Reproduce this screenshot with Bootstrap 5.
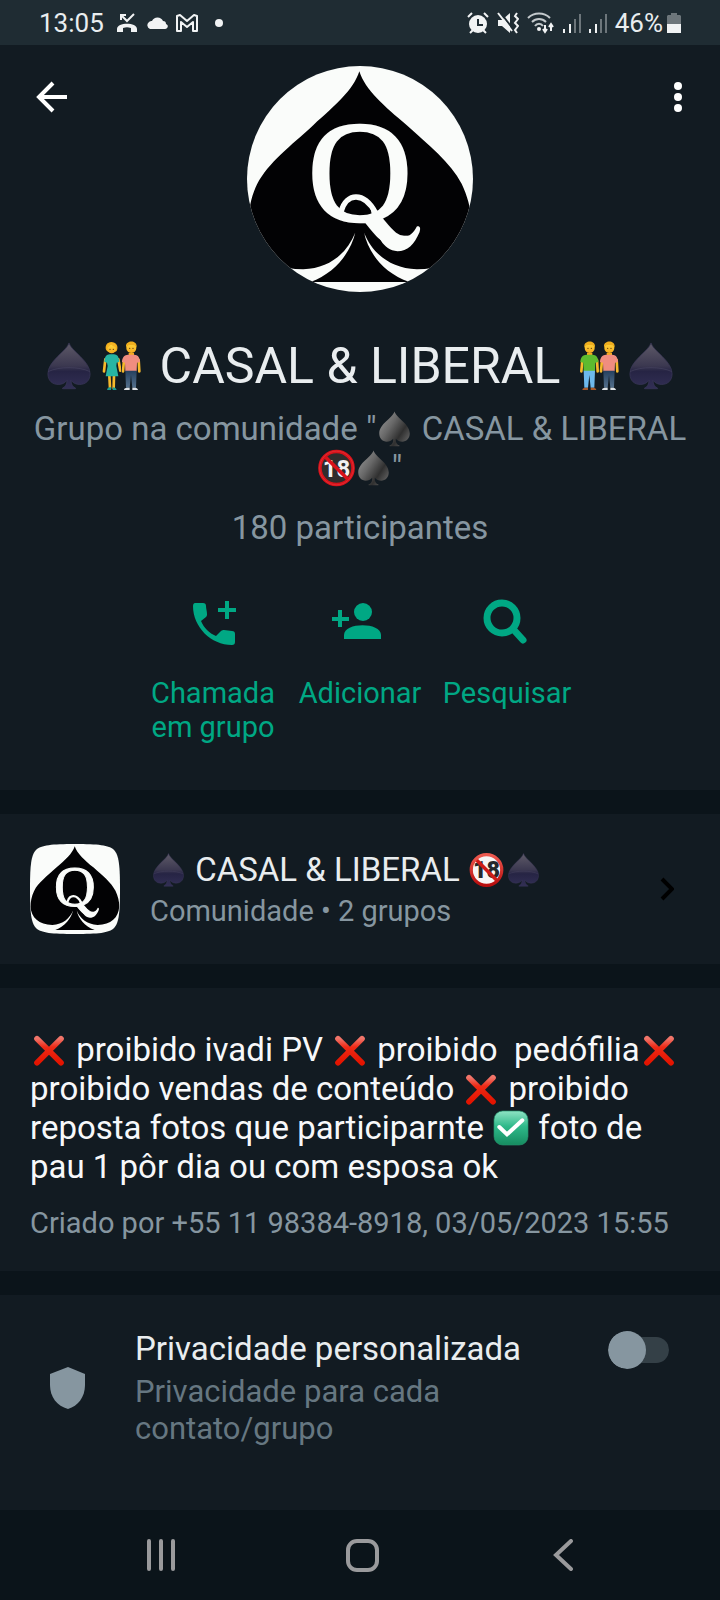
<!DOCTYPE html>
<html lang="pt-BR">
<head>
<meta charset="utf-8">
<meta name="viewport" content="width=device-width, initial-scale=1">
<title>Dados do grupo</title>
<link href="https://cdn.jsdelivr.net/npm/bootstrap@5.3.0/dist/css/bootstrap.min.css" rel="stylesheet">
<style>
  :root { --bar: #1f2c33; --panel: #121b22; --base: #0b141a; --ink: #e9edef; --muted: #8696a0; --dim: #667781; --green: #00a884; }
  body { background: var(--base); color: var(--ink); font-family: Roboto, "Liberation Sans", sans-serif; font-size: 33px; line-height: 39px; }
  svg { display: block; flex: none; }
  button.plain { background: none; border: 0; padding: 0; color: inherit; }
  .panel { background: var(--panel); }
  .statusbar { background: var(--bar); height: 45px; padding: 0 39px; font-size: 26px; line-height: 30px; }
  .status-left { gap: 8px; }
  .status-right { gap: 8px; }
  .top-grid { display: grid; grid-template-columns: 1fr auto 1fr; padding: 21px 22px 0; }
  .btn-back { width: 60px; height: 62px; }
  .btn-more { width: 40px; height: 62px; }
  .top-panel { padding-bottom: 46px; }
  .group-name { font-size: 50px; line-height: 58px; font-weight: 400; margin: 45px 0 0; }
  .group-of { color: var(--muted); margin: 14px 30px 0; }
  .group-count { color: var(--muted); margin: 21px 30px 0; }
  .actions { margin-top: 49px; }
  .action { width: 147px; font-size: 29px; line-height: 34px; }
  button.action { color: var(--green); }
  .action span { margin-top: 24px; }
  .em { display: inline-block; width: 37px; height: 38px; vertical-align: -8px; }
  .group-name .em { width: 52px; height: 52px; vertical-align: -9px; }
  .gap-24 { margin-top: 24px; }
  .community { padding: 30px; gap: 30px; color: var(--ink); }
  .sub { color: var(--muted); font-size: 29px; line-height: 34px; }
  .community .sub { margin-top: 5px; }
  .about { padding: 42px 30px 31px; }
  .about p { margin: 0; color: #f7f8fa; white-space: pre-wrap; }
  .about .em { width: 38px; }
  .about .sub { color: var(--muted); margin-top: 20px; }
  .privacy { padding: 34px 51px 63px 50px; }
  .privacy label { margin-left: 50px; }
  .privacy .hint { color: var(--dim); font-size: 31px; line-height: 37px; margin-top: 5px; }
  .form-check-input.toggle { width: 61px; height: 38px; margin: 2px 0 0; border: 0; border-radius: 19px; background: center / contain no-repeat url("data:image/svg+xml,%3Csvg xmlns='http://www.w3.org/2000/svg' viewBox='0 0 61 38'%3E%3Crect x='6' y='6' width='55' height='26' rx='13' fill='%23344047'/%3E%3Ccircle cx='19' cy='19' r='19' fill='%238696a0'/%3E%3C/svg%3E"); }
  .form-check-input.toggle:checked { transform: scaleX(-1); }
  .softkeys { height: 90px; padding: 0 57px 0 61px; color: #9a9a9c; }
</style>
</head>
<body>

<svg width="0" height="0" class="position-absolute" aria-hidden="true">
  <defs>
    <linearGradient id="gSpade" x1="0" y1="0" x2="0" y2="1"><stop offset="0" stop-color="#5e5a68"/><stop offset=".5" stop-color="#3b3850"/><stop offset=".62" stop-color="#262444"/><stop offset="1" stop-color="#322f55"/></linearGradient>
    <linearGradient id="gSilver" x1=".1" y1=".2" x2=".9" y2=".8"><stop offset="0" stop-color="#8b8b8b"/><stop offset=".35" stop-color="#686868"/><stop offset=".75" stop-color="#303030"/><stop offset="1" stop-color="#555"/></linearGradient>
    <linearGradient id="gCross" x1="0" y1="0" x2="0" y2="1"><stop offset="0" stop-color="#f0756a"/><stop offset=".35" stop-color="#ee2a16"/><stop offset="1" stop-color="#e31400"/></linearGradient>
    <linearGradient id="gCheck" x1="0" y1="0" x2="0" y2="1"><stop offset="0" stop-color="#8fe3c4"/><stop offset=".45" stop-color="#2fb98a"/><stop offset="1" stop-color="#168c60"/></linearGradient>
    <linearGradient id="gSkin" x1="0" y1="0" x2="0" y2="1"><stop offset="0" stop-color="#ffd83c"/><stop offset="1" stop-color="#f3a91f"/></linearGradient>
    <linearGradient id="gJeans" x1="0" y1="0" x2="0" y2="1"><stop offset="0" stop-color="#25405e"/><stop offset="1" stop-color="#54708c"/></linearGradient>
    <linearGradient id="gRing" x1="0" y1="0" x2="0" y2="1"><stop offset="0" stop-color="#ef5a50"/><stop offset="1" stop-color="#b80d0d"/></linearGradient>

    <symbol id="spade" viewBox="-2 0 160 160">
      <path d="M78 9C84 33 143 64 143 104c0 22-15 33-32 33-11 0-20-4-27-13 1 13 5 20 14 24v2H58v-2c9-4 13-11 14-24-7 9-16 13-27 13-17 0-32-11-32-33C13 64 72 33 78 9Z" fill="url(#gSpade)" stroke="#3a3759" stroke-width="2"/>
      <path d="M14 97c35-16 93-16 128 0" fill="none" stroke="#454260" stroke-width="2"/>
    </symbol>
    <symbol id="spade-silver" viewBox="0 0 114 114">
      <path d="M57 3C64 24 104 41 104 71c0 16-11 25-23 25-8 0-15-3-20-9 0 11 2 18 11 20v3H42v-3c9-2 11-9 11-20-5 6-12 9-20 9-12 0-23-9-23-25C10 41 50 24 57 3Z" fill="url(#gSilver)"/>
    </symbol>
    <symbol id="cross" viewBox="0 0 114 114"><path d="M21 23 93 95M93 23 21 95" fill="none" stroke="url(#gCross)" stroke-width="17" stroke-linecap="round"/></symbol>
    <symbol id="check" viewBox="0 0 114 114"><rect x="6" y="6" width="102" height="102" rx="26" fill="url(#gCheck)" stroke="#24936c" stroke-width="2"/><path d="M22 54 45 76 91 34" fill="none" stroke="#fff" stroke-width="12" stroke-linecap="round"/></symbol>
    <symbol id="ban-dark" viewBox="0 0 114 114">
      <circle cx="57" cy="57" r="52" fill="#302c2c"/>
      <text x="57" y="84" text-anchor="middle" font-family="Roboto, sans-serif" font-weight="700" font-size="74" fill="#f2f2f2">18</text>
      <path d="M22 22 92 92" stroke="#d8121a" stroke-width="11"/><circle cx="57" cy="57" r="51" fill="none" stroke="#d8121a" stroke-width="11"/><circle cx="57" cy="57" r="52" fill="none" stroke="#e5383e" stroke-width="2"/>
    </symbol>
    <symbol id="ban-light" viewBox="0 0 114 114">
      <circle cx="57" cy="57" r="48" fill="#f7f5f5"/>
      <text x="57" y="83" text-anchor="middle" font-family="Roboto, sans-serif" font-weight="900" font-size="72" fill="#26282c">18</text>
      <path d="M24 24 90 90" stroke="#cf1c18" stroke-width="11"/><circle cx="57" cy="57" r="47" fill="none" stroke="url(#gRing)" stroke-width="10"/>
    </symbol>
    <symbol id="man" viewBox="0 0 78 156">
      <circle cx="32" cy="24" r="15" fill="url(#gSkin)"/><path d="M16 20C14 1 48-1 48 19l-1 4c-2-8-8-8-15-8s-13 0-15 8Z" fill="#efae1e"/>
      <circle cx="27" cy="25" r="2" fill="#5d3a10"/><circle cx="37" cy="25" r="2" fill="#5d3a10"/>
      <path d="M10 60 7 94M54 60l2 34" stroke="#f7b92b" stroke-width="8" stroke-linecap="round"/>
      <path d="M24 38h16v9H24Z" fill="#f3a91f"/>
      <path d="M22 44h19c10 1 16 6 17 22l-9 2-1 26H14l-1-26-9-2c1-16 8-21 18-22Z" fill="var(--shirt)"/>
      <path d="M14 92h34l-2 51H35l-4-38-4 38H16Z" fill="var(--legs)"/>
      <path d="M10 149c1-6 8-6 17-6v7H10ZM35 143c9 0 16 0 17 7H35Z" fill="var(--shoes)"/>
    </symbol>
    <symbol id="woman" viewBox="0 0 78 156">
      <path d="M33 29c-4-12 4-23 16-23 14 0 22 11 17 25-3 9-28 9-33-2Z" fill="#f0ad1c"/><circle cx="50" cy="27" r="13" fill="url(#gSkin)"/><path d="M34 24C38 6 60 4 65 21 54 21 50 13 47 14c-3 4-8 8-13 10Z" fill="#f5b524"/>
      <circle cx="45" cy="28" r="2" fill="#5d3a10"/><circle cx="55" cy="28" r="2" fill="#5d3a10"/>
      <path d="M31 58 27 94M70 58l6 34M43 106l2 38M57 106l-1 38" stroke="#f7b92b" stroke-width="8" stroke-linecap="round"/>
      <path d="M44 43h13c9 1 14 4 16 22l-8 3-1 10 6 31H32l6-31-2-10-8-3c1-16 7-21 16-22Z" fill="#27b5a3"/>
      <path d="M36 150c1-7 6-8 12-8v8ZM53 142c6 0 10 2 12 8H53Z" fill="#1c9c92"/>
    </symbol>

    <!-- queen of spades emblem shared by both avatars -->
    <symbol id="emblem" viewBox="52 48 676 676">
      <path d="M52 48h676v676H52Z" fill="#fafcfa"/>
      <path d="M388 64C406 120 462 168 530 225 595 284 660 335 694 400 712 438 724 480 722 520 718 600 660 656 560 656 480 654 425 606 402 546 415 606 460 668 538 694H242C315 668 362 606 376 546 352 606 300 654 220 656 120 656 60 600 56 520 56 480 64 440 82 402 116 336 182 288 250 225 318 164 370 120 388 64Z" fill="#020204"/>
      <path d="M374 550h30l-10 20h-10Z" fill="#020204"/>
      <text x="233" y="511" font-family="Liberation Serif, serif" font-size="434" fill="#fafcfa" stroke="#fafcfa" stroke-width="7">Q</text>
      <path d="M334 482C350 426 402 424 436 486" fill="none" stroke="#fafcfa" stroke-width="16" stroke-linecap="round"/>
      <path d="M420 462C452 490 472 560 514 560 540 560 550 546 560 528 570 526 572 534 568 545 552 582 532 602 502 602 458 600 440 552 428 512Z" fill="#fafcfa"/>
    </symbol>
    <clipPath id="round"><circle cx="113" cy="113" r="113"/></clipPath>
    <clipPath id="squircle"><path d="M45 0C68 0 79 1 84 6S90 22 90 45 89 79 84 84 68 90 45 90 11 89 6 84 0 68 0 45 1 11 6 6 22 0 45 0Z"/></clipPath>
    <symbol id="bars" viewBox="0 0 18 22">
      <path d="M1 17v4M7 12v9" stroke="#f1f3f4" stroke-width="2"/><path d="M12 7v14M17 2v19" stroke="#6d767b" stroke-width="2"/>
    </symbol>
  </defs>
</svg>

<header class="statusbar d-flex align-items-center justify-content-between">
  <div class="status-left d-flex align-items-center">
    <span>13:05</span>
    <svg class="ms-1" width="22" height="22" viewBox="0 0 22 22" role="img" aria-label="Chamada perdida"><path d="M1 17c0-7 20-7 20 0v3h-6v-4c-3-1-5-1-8 0v4H1Z" fill="#f1f3f4"/><path d="M5 8V3h5M5 3l6 6 7-7" fill="none" stroke="#f1f3f4" stroke-width="2"/></svg>
    <svg width="22" height="22" viewBox="0 0 22 22" role="img" aria-label="Nuvem"><path d="M4 17a4 4 0 0 1-1-7c1-1 2-1 3-1a6 6 0 0 1 11 0c2 0 3 1 3 3 3 1 2 5-1 5Z" fill="#f1f3f4"/></svg>
    <svg width="22" height="22" viewBox="0 0 22 22" role="img" aria-label="Gmail"><path d="M1 19V4l3-1 7 6 7-6 3 1v15h-4v-9l-6 5-6-5v9Z" fill="none" stroke="#f1f3f4" stroke-width="2" stroke-linejoin="round"/></svg>
    <svg class="ms-2" width="10" height="10" viewBox="0 0 10 10" aria-hidden="true"><circle cx="5" cy="5" r="4" fill="#f1f3f4"/></svg>
  </div>
  <div class="status-right d-flex align-items-center">
    <svg width="22" height="22" viewBox="0 0 22 22" role="img" aria-label="Alarme"><circle cx="11" cy="12" r="9" fill="#f1f3f4"/><path d="M1 5 5 1M21 5l-4-4M3 21l3-3M19 21l-3-3" stroke="#f1f3f4" stroke-width="2"/><path d="M11 7v6h5" fill="none" stroke="#1f2c33" stroke-width="2"/></svg>
    <svg width="22" height="22" viewBox="0 0 22 22" role="img" aria-label="Vibrar"><path d="M1 8h4l8-7v20l-8-7H1Z" fill="#f1f3f4"/><path d="M3 0 16 17" stroke="#1f2c33" stroke-width="2"/><path d="m1 1 14 18" stroke="#f1f3f4" stroke-width="2"/><path d="m20 1-2 3 3 3-3 4 3 3-3 4 2 3" fill="none" stroke="#f1f3f4" stroke-width="2"/></svg>
    <svg width="28" height="22" viewBox="0 0 28 22" role="img" aria-label="Wi-Fi"><path d="M1 6c6-6 16-6 22 0M5 10c4-4 10-4 14 0M8 14c2-3 6-3 8 0" fill="none" stroke="#c3c9cc" stroke-width="2"/><circle cx="12" cy="17" r="2" fill="#f1f3f4"/><path d="M18 13v7m-2-3 2 3 2-3M24 19v-7m-2 3 2-3 2 3" fill="none" stroke="#f1f3f4" stroke-width="2"/></svg>
    <svg width="18" height="22" role="img" aria-label="Sinal 1"><use href="#bars"/></svg>
    <svg width="18" height="22" role="img" aria-label="Sinal 2"><use href="#bars"/></svg>
    <span class="d-flex align-items-center gap-1"><span>46%</span>
    <svg width="14" height="22" viewBox="0 0 14 22" aria-hidden="true"><path d="M4 1h6v2h3l1 1v8H0V4l1-1h3Z" fill="#6d767b"/><path d="M0 12h14v9H0Z" fill="#f1f3f4"/></svg></span>
  </div>
</header>

<main>
  <section class="panel top-panel text-center">
    <div class="top-grid">
      <button class="plain btn-back d-flex align-items-center justify-content-center" aria-label="Voltar"><svg width="32" height="32" viewBox="0 0 32 32"><path d="M31 16H4M17 2 3 16l14 14" fill="none" stroke="#fff" stroke-width="4"/></svg></button>
      <svg width="226" height="226" viewBox="0 0 226 226" role="img" aria-label="Foto do grupo"><g clip-path="url(#round)"><use href="#emblem" width="226" height="226"/></g></svg>
      <button class="plain btn-more d-flex align-items-center justify-content-center ms-auto" aria-label="Mais opções"><svg width="8" height="32" viewBox="0 0 8 32"><g fill="#fff"><circle cx="4" cy="5" r="4"/><circle cx="4" cy="16" r="4"/><circle cx="4" cy="27" r="4"/></g></svg></button>
    </div>
    <h1 class="group-name"><svg class="em"><use href="#spade"/></svg><svg class="em" viewBox="0 0 156 156"><use href="#woman" width="78" height="156"/><use href="#man" x="77" width="78" height="156" style="--shirt:#f08d80;--legs:url(#gJeans);--shoes:#dfe3e6"/></svg> CASAL &amp; LIBERAL <svg class="em" viewBox="0 0 156 156"><use href="#man" x="18" width="78" height="156" style="--shirt:#5dbb2f;--legs:#6db9ec;--shoes:#a85a2a"/><use href="#man" x="77" width="78" height="156" style="--shirt:#f08d80;--legs:url(#gJeans);--shoes:#dfe3e6"/></svg><svg class="em"><use href="#spade"/></svg></h1>
    <p class="group-of">Grupo na comunidade "<svg class="em"><use href="#spade-silver"/></svg> CASAL &amp; LIBERAL <svg class="em"><use href="#ban-dark"/></svg><svg class="em"><use href="#spade-silver"/></svg>"</p>
    <p class="group-count">180 participantes</p>
    <div class="actions d-flex justify-content-center align-items-start">
      <button class="plain action d-flex flex-column align-items-center"><svg width="56" height="56" viewBox="0 0 56 56"><path d="M10 7h8c2 0 3 1 3 3 0 3 1 5 1 8 0 1 0 2-1 3l-5 4c3 7 8 12 15 15l5-5c1-1 2-1 3-1l8 1c2 0 3 1 3 3v8c0 2-1 3-3 3C26 49 8 31 8 10c0-2 1-3 2-3Z" fill="currentColor"/><path d="M42 5v18M33 14h18" stroke="currentColor" stroke-width="4"/></svg><span>Chamada em grupo</span></button>
      <button class="plain action d-flex flex-column align-items-center"><svg width="56" height="56" viewBox="0 0 56 56"><circle cx="31" cy="16" r="9" fill="currentColor"/><path d="M12 43v-4c0-13 37-13 37 0v4Z" fill="currentColor"/><path d="M8 14v17M0 23h17" stroke="currentColor" stroke-width="4"/></svg><span>Adicionar</span></button>
      <button class="plain action d-flex flex-column align-items-center"><svg width="56" height="56" viewBox="0 0 56 56"><circle cx="23" cy="22" r="15" fill="none" stroke="currentColor" stroke-width="7"/><path d="m34 33 10 11" stroke="currentColor" stroke-width="7" stroke-linecap="round"/></svg><span>Pesquisar</span></button>
    </div>
  </section>

  <a href="#comunidade" class="panel gap-24 community d-flex align-items-center text-decoration-none">
    <svg width="90" height="90" viewBox="0 0 90 90" role="img" aria-label="Foto da comunidade"><g clip-path="url(#squircle)"><use href="#emblem" width="90" height="90"/></g></svg>
    <div class="flex-grow-1">
      <div><svg class="em"><use href="#spade"/></svg> CASAL &amp; LIBERAL <svg class="em"><use href="#ban-light"/></svg><svg class="em"><use href="#spade"/></svg></div>
      <div class="sub">Comunidade • 2 grupos</div>
    </div>
    <svg class="me-3" width="14" height="24" viewBox="0 0 14 24" aria-hidden="true"><path d="m2 2 10 10L2 22" fill="none" stroke="#000" stroke-width="4"/></svg>
  </a>

  <section class="panel gap-24 about">
    <p><svg class="em"><use href="#cross"/></svg> proibido ivadi PV <svg class="em"><use href="#cross"/></svg> proibido  pedófilia<svg class="em"><use href="#cross"/></svg> proibido vendas de conteúdo <svg class="em"><use href="#cross"/></svg> proibido reposta fotos que participarnte <svg class="em"><use href="#check"/></svg> foto de pau 1 pôr dia ou com esposa ok</p>
    <p class="sub">Criado por +55 11 98384-8918, 03/05/2023 15:55</p>
  </section>

  <section class="panel gap-24 privacy d-flex align-items-start">
    <svg class="align-self-center" width="35" height="42" viewBox="0 0 35 42" aria-hidden="true"><path d="m18 0 17 7v11c0 12-7 21-17 24C7 39 0 30 0 18V7Z" fill="#8696a0"/></svg>
    <label class="flex-grow-1" for="privacidade"><span class="d-block">Privacidade personalizada</span><span class="hint d-block">Privacidade para cada contato/grupo</span></label>
    <input class="form-check-input toggle flex-shrink-0" type="checkbox" role="switch" id="privacidade">
  </section>
</main>

<nav class="softkeys d-flex align-items-stretch" aria-label="Sistema">
  <button class="plain flex-fill w-100 d-flex align-items-center justify-content-center" aria-label="Recentes"><svg width="30" height="32" viewBox="0 0 30 32"><path d="M3 2v28M15 2v28M27 2v28" stroke="currentColor" stroke-width="4" stroke-linecap="round"/></svg></button>
  <button class="plain flex-fill w-100 d-flex align-items-center justify-content-center" aria-label="Início"><svg width="33" height="33" viewBox="0 0 33 33"><rect x="2" y="2" width="29" height="29" rx="9" fill="none" stroke="currentColor" stroke-width="4"/></svg></button>
  <button class="plain flex-fill w-100 d-flex align-items-center justify-content-center" aria-label="Voltar"><svg width="20" height="32" viewBox="0 0 20 32"><path d="M18 2 3 16l15 14" fill="none" stroke="currentColor" stroke-width="4" stroke-linecap="round"/></svg></button>
</nav>

<script src="https://cdn.jsdelivr.net/npm/bootstrap@5.3.0/dist/js/bootstrap.bundle.min.js"></script>
</body>
</html>
